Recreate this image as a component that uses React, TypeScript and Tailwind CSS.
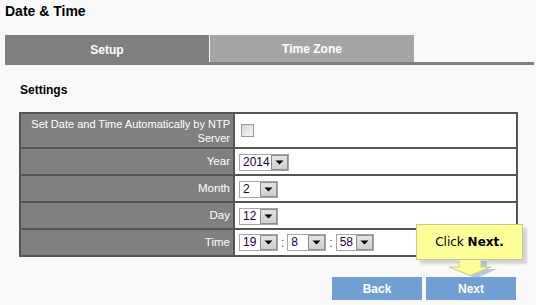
import React from 'react';

// ── Small pieces ──────────────────────────────────────────────────────────────
function Select({ value, width }: { value: string; width: number }) {
  return (
    <div
      className="inline-flex h-[17px] items-stretch border border-[#a7a7a7] bg-white align-middle"
      style={{ width }}
    >
      <span className="flex-1 pl-[3px] text-[12px] leading-[15px] text-[#1a0033]">{value}</span>
      <span className="flex w-[17px] items-center justify-center border border-[#8e8e8e] bg-[linear-gradient(#e4e4e4,#cfcfcf)]">
        <svg width="9" height="5" viewBox="0 0 9 5" aria-hidden="true">
          <path d="M0.5 0.5h8L4.5 4.5z" fill="#000" />
        </svg>
      </span>
    </div>
  );
}

const ROWS = [
  { label: 'Year', body: <Select value="2014" width={50} /> },
  { label: 'Month', body: <Select value="2" width={39} /> },
  { label: 'Day', body: <Select value="12" width={39} /> },
  {
    label: 'Time',
    body: (
      <div className="flex items-center gap-[3px]">
        <Select value="19" width={39} />
        <span className="text-[12px] text-[#555]">:</span>
        <Select value="8" width={39} />
        <span className="text-[12px] text-[#555]">:</span>
        <Select value="58" width={38} />
      </div>
    ),
  },
];

// ── Page ──────────────────────────────────────────────────────────────────────
export default function App() {
  return (
    <div className="relative h-[305px] w-[536px] overflow-hidden bg-[#f9f9f9] font-['Liberation_Sans',Arial,sans-serif]">
      {/* Title */}
      <div className="h-[35px] pl-[5px] pt-[3px] text-[14px] font-bold leading-[16px] text-black">
        Date &amp; Time
      </div>

      {/* Tabs */}
      <div className="ml-[5px] w-[529px]">
        <div className="flex h-[27px] items-start gap-px">
          <div className="flex h-[27px] w-[204px] items-center justify-center bg-[#7f7f7f] pt-[3px] text-[12px] font-bold text-white">
            Setup
          </div>
          <div className="flex h-[27px] w-[204px] items-center justify-center bg-[#a5a5a5] pt-[1px] text-[12px] font-bold text-white">
            Time Zone
          </div>
        </div>
        <div className="h-[3px] bg-[#7f7f7f]" />
      </div>

      {/* Section heading */}
      <div className="mt-[18px] pl-[20px] text-[12px] font-bold leading-[14px] text-black">Settings</div>

      {/* Settings table */}
      <table className="ml-[19px] mt-[15px] w-[499px] table-fixed border-collapse">
        <colgroup>
          <col className="w-[214px]" />
          <col />
        </colgroup>
        <tbody>
          <tr className="h-[35px]">
            <td className="border-2 border-[#555] bg-[#808080] pr-[3px] pl-0 text-right text-[11px] leading-[14px] text-white">
              Set Date and Time Automatically by NTP Server
            </td>
            <td className="border-2 border-[#555] bg-white pl-[6px]">
              <span className="block h-[13px] w-[13px] border border-[#9a9a9a] bg-[linear-gradient(135deg,#d6d6d6,#f6f6f6)]" />
            </td>
          </tr>
          {ROWS.map(({ label, body }) => (
            <tr key={label} className="h-[27px]">
              <td className="border-2 border-[#555] bg-[#808080] pr-[3px] text-right text-[11.5px] text-white">
                {label}
              </td>
              <td className="border-2 border-[#555] bg-white pl-[4px]">{body}</td>
            </tr>
          ))}
        </tbody>
      </table>

      {/* Buttons */}
      <div className="ml-[332px] mt-[20px] flex gap-[4px]">
        <button className="h-[23px] w-[90px] bg-[#719fd3] text-[12px] font-bold text-white">Back</button>
        <button className="h-[23px] w-[90px] bg-[#719fd3] text-[12px] font-bold text-white">Next</button>
      </div>

      {/* Callout */}
      <div className="absolute left-[416px] top-[224px]">
        <div className="absolute left-[4px] top-[4px] h-[36px] w-[107px] bg-[#d4d4d4] blur-[1px]" />
        <svg className="absolute left-[33px] top-[35px] overflow-visible" width="44" height="18" aria-hidden="true">
          <path d="M13 0h24v8h10l-21 9.5L5 8h8z" fill="#8aa6c6" opacity="0.6" transform="translate(1 2)" />
          <path d="M10 0h22v8h10l-21 8.5L0 8h10z" fill="#ffff99" stroke="#c8c88a" strokeWidth="1" />
          <rect x="10.5" y="-2" width="21" height="3" fill="#ffff99" />
        </svg>
        <div className="relative flex h-[36px] w-[107px] items-center justify-center border border-[#c8c88a] bg-[#ffff99] font-['DejaVu_Sans',Verdana,sans-serif] text-[12px] text-black">
          Click&nbsp;<b>Next.</b>
        </div>
      </div>
    </div>
  );
}
